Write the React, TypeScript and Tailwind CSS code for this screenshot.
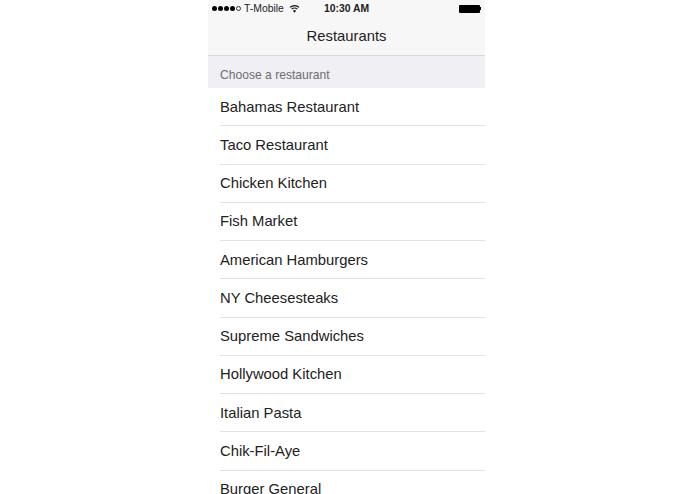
const restaurants = [
  "Bahamas Restaurant",
  "Taco Restaurant",
  "Chicken Kitchen",
  "Fish Market",
  "American Hamburgers",
  "NY Cheesesteaks",
  "Supreme Sandwiches",
  "Hollywood Kitchen",
  "Italian Pasta",
  "Chik-Fil-Aye",
  "Burger General",
];

export default function App() {
  return (
    <div className="h-[494px] overflow-hidden bg-white font-['Liberation_Sans',sans-serif]">
      <div className="ml-[208px] w-[277px]">
        {/* Status bar + nav */}
        <div className="h-[56px] border-b border-[#d9d9d9] bg-[#f7f7f8]">
          <div className="relative flex h-[17px] items-center px-[4px] text-[10.4px] text-[#222]">
            <div className="flex items-center gap-[1px]">
              <span className="h-[5px] w-[5px] rounded-full bg-black" />
              <span className="h-[5px] w-[5px] rounded-full bg-black" />
              <span className="h-[5px] w-[5px] rounded-full bg-black" />
              <span className="h-[5px] w-[5px] rounded-full bg-black" />
              <span className="h-[5px] w-[5px] rounded-full border border-[#333]" />
            </div>
            <span className="ml-[3px]">T-Mobile</span>
            <svg className="ml-[5px]" width="11" height="9" viewBox="0 0 12 9">
              <path d="M6 9 L4.3 6.9 A2.8 2.8 0 0 1 7.7 6.9 Z" fill="#111" />
              <path d="M2.9 5.2 A4.9 4.9 0 0 1 9.1 5.2" fill="none" stroke="#111" strokeWidth="1.2" />
              <path d="M1 3.2 A7.6 7.6 0 0 1 11 3.2" fill="none" stroke="#111" strokeWidth="1.2" />
            </svg>
            <span className="absolute left-[116px] font-bold">10:30 AM</span>
            <div className="ml-auto flex items-center">
              <span className="h-[8px] w-[21px] rounded-[1px] bg-black" />
              <span className="h-[3px] w-[1px] bg-black" />
            </div>
          </div>
          <div className="flex h-[38px] items-center justify-center text-[14.8px] text-[#222]">Restaurants</div>
        </div>

        {/* Section header */}
        <div className="flex h-[32px] items-center border-b border-[#f0f0f0] bg-[#efeff4] pl-[12px] pt-[7px] text-[12.1px] text-[#6d6d72]">
          Choose a restaurant
        </div>

        {/* List */}
        <ul className="pl-[12px]">
          {restaurants.map((name) => (
            <li
              key={name}
              className="flex h-[38.25px] items-center border-b border-[#e2e2e2] pt-[0.2px] text-[14.8px] text-[#222]"
            >
              {name}
            </li>
          ))}
        </ul>
      </div>
    </div>
  );
}
